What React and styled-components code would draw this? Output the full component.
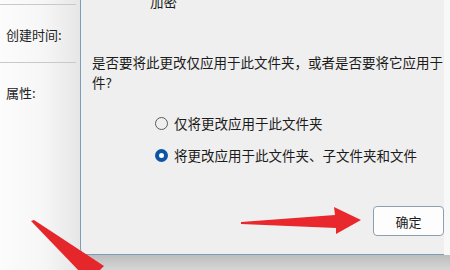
import styled, { createGlobalStyle } from "styled-components";

const Global = createGlobalStyle`
  html, body { margin: 0; padding: 0; background: #fff; }
  body { font-family: "Noto Sans CJK SC", "Noto Sans", sans-serif; }
`;

const Page = styled.div`
  position: relative;
  width: 450px;
  height: 270px;
  overflow: hidden;
  display: flex;
  background: #fafafa;
`;

const SidePanel = styled.div`
  width: 80px;
  flex-shrink: 0;
  display: flex;
  flex-direction: column;
  background: linear-gradient(to right, #fcfcfc 0%, #f6f6f6 55%, #e6e6e6 100%);
`;

const Divider = styled.div`
  height: 1px;
  margin-top: ${(p) => p.$top}px;
  margin-right: 4px;
  background: #c9c9c9;
`;

const Label = styled.div`
  height: 20px;
  line-height: 20px;
  padding-left: 6px;
  margin-top: ${(p) => p.$top}px;
  font-size: 13px;
  color: #222;
`;

const RightCol = styled.div`
  flex: 1;
  display: flex;
  flex-direction: column;
`;

const DialogRow = styled.div`
  height: 255px;
  display: flex;
  background: #f7f7f7;
`;

const Dialog = styled.div`
  flex: 1;
  display: flex;
  flex-direction: column;
  background: #efefef;
  border-left: 1px solid #7d9db7;
  border-bottom: 1px solid #7d9db7;
  border-bottom-left-radius: 6px;
  padding-left: 11px;
  font-size: 13.5px;
  color: #1b1b1b;
`;

const Strip = styled.div`
  width: 6px;
  background: #f8f8f8;
`;

const Band = styled.div`
  flex: 1;
  background: linear-gradient(to bottom, #bdbdbd, #d6d6d6);
`;

const TextLine = styled.div`
  height: 20px;
  line-height: 20px;
  white-space: nowrap;
  margin-top: ${(p) => p.$top || 0}px;
  padding-left: ${(p) => p.$indent || 0}px;
`;

const RadioRow = styled.div`
  display: flex;
  align-items: center;
  gap: 6px;
  height: 20px;
  margin-top: ${(p) => p.$top}px;
  padding-left: 63px;
  white-space: nowrap;
`;

const Radio = styled.span`
  width: 13px;
  height: 13px;
  box-sizing: border-box;
  border-radius: 50%;
  flex-shrink: 0;
  border: ${(p) => (p.$on ? "4px solid #0c55a3" : "1px solid #5a5a5a")};
  background: ${(p) => (p.$on ? "#fff" : "transparent")};
`;

const Footer = styled.div`
  display: flex;
  justify-content: flex-end;
  margin-top: 41px;
`;

const Button = styled.div`
  width: 71px;
  height: 30px;
  box-sizing: border-box;
  display: flex;
  align-items: center;
  justify-content: center;
  border: 1px solid #8da0b0;
  border-radius: 4px;
  background: #fdfdfd;
  font-size: 13px;
  color: #1b1b1b;
`;

const Overlay = styled.svg`
  position: absolute;
  left: 0;
  top: 0;
  pointer-events: none;
`;

export default function App() {
  return (
    <>
      <Global />
      <Page>
        <SidePanel>
          <Divider $top={4} />
          <Label $top={20}>创建时间:</Label>
          <Divider $top={17} />
          <Label $top={20}>属性:</Label>
        </SidePanel>
        <RightCol>
          <DialogRow>
            <Dialog>
              <TextLine $top={-9} $indent={58}>加密</TextLine>
              <TextLine $top={41}>是否要将此更改仅应用于此文件夹，或者是否要将它应用于</TextLine>
              <TextLine>件?</TextLine>
              <RadioRow $top={21}>
                <Radio />
                仅将更改应用于此文件夹
              </RadioRow>
              <RadioRow $top={12}>
                <Radio $on />
                将更改应用于此文件夹、子文件夹和文件
              </RadioRow>
              <Footer>
                <Button>确定</Button>
              </Footer>
            </Dialog>
            <Strip />
          </DialogRow>
          <Band />
        </RightCol>
        <Overlay width="450" height="270" viewBox="0 0 450 270">
          <polygon points="31,221 34,220 104,266 98,272 80,272" fill="#e5262b" />
          <polygon
            points="241,222 335,215 334,207 361,220 336,234 336,228 241,224"
            fill="#e8282c"
          />
        </Overlay>
      </Page>
    </>
  );
}
